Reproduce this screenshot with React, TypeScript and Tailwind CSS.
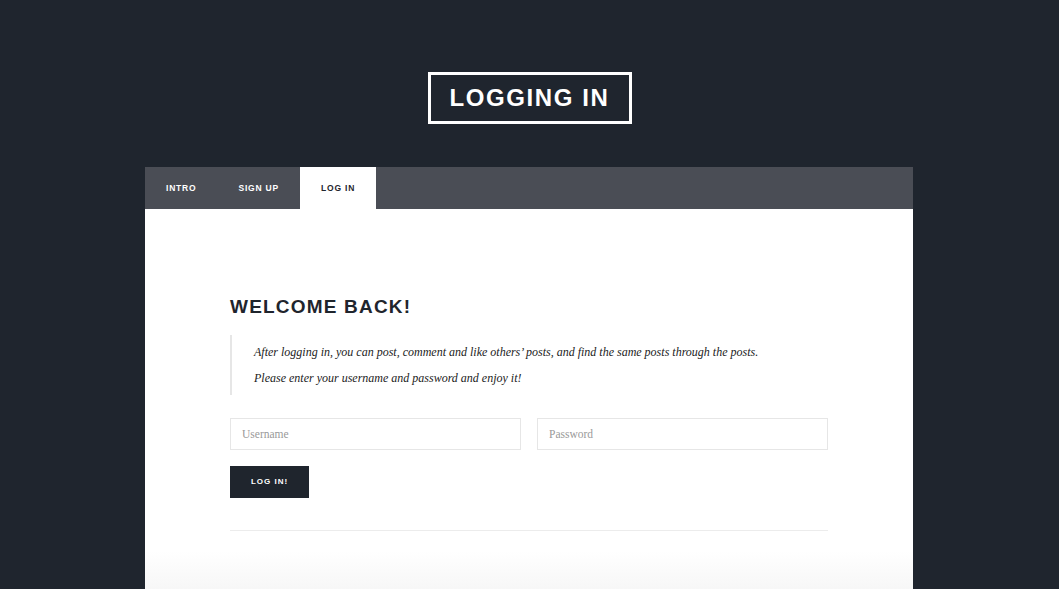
import React from 'react'

const SANS = "font-['Liberation_Sans',Arial,sans-serif]"
const SERIF = "font-['Liberation_Serif',Georgia,serif]"

function Tabs() {
  const tabs = ['Intro', 'Sign Up', 'Log In']
  const active = 'Log In'
  return (
    <div className="flex h-[42px] bg-[#4a4d55]">
      {tabs.map((t) => (
        <div
          key={t}
          className={`${SANS} flex items-center px-[21px] text-[8.5px] font-bold uppercase tracking-[0.8px] ${
            t === active ? 'bg-white text-[#1f252d]' : 'text-white'
          }`}
        >
          {t}
        </div>
      ))}
    </div>
  )
}

export default function App() {
  return (
    <div className="h-[589px] bg-[#1f252e] overflow-hidden">
      {/* Título */}
      <div className="flex justify-center pt-[72px]">
        <h1
          className={`${SANS} border-[3px] border-white px-[19px] h-[52px] flex items-center text-[24px] font-bold uppercase tracking-[1.6px] text-white`}
        >
          Logging In
        </h1>
      </div>

      {/* Panel */}
      <div className="flex justify-start mt-[43px] pl-[145px]">
        <div className="w-[768px]">
          <Tabs />
          <div className="bg-gradient-to-b from-white from-[90%] to-[#f7f7f7] px-[85px] pt-[86px] pb-[58px]">
            <h2 className={`${SANS} text-[19px] font-bold uppercase tracking-[1.2px] text-[#1f252d] leading-[24px]`}>
              Welcome Back!
            </h2>

            <blockquote className={`${SERIF} mt-[16px] border-l-2 border-[#e6e6e6] pl-[22px] pt-[9px] pb-[9px] italic text-[12px] text-[#222]`}>
              <p className="leading-[16px]">
                After logging in, you can post, comment and like others’ posts, and find the same posts through the posts.
              </p>
              <p className="mt-[10px] leading-[16px]">Please enter your username and password and enjoy it!</p>
            </blockquote>

            <form className="mt-[23px]" onSubmit={(e) => e.preventDefault()}>
              <div className="grid grid-cols-2 gap-[16px]">
                <input
                  placeholder="Username"
                  className={`${SERIF} h-[32px] border border-[#e6e6e6] px-[11px] text-[11.5px] text-[#333] placeholder:text-[#999] outline-none`}
                />
                <input
                  type="password"
                  placeholder="Password"
                  className={`${SERIF} h-[32px] border border-[#e6e6e6] px-[11px] text-[11.5px] text-[#333] placeholder:text-[#999] outline-none`}
                />
              </div>
              <button
                className={`${SANS} mt-[16px] h-[32px] w-[79px] bg-[#1f252d] text-[8px] font-bold uppercase tracking-[1px] text-white`}
              >
                Log In!
              </button>
            </form>

            <hr className="mt-[32px] border-t border-[#ececec]" />
          </div>
        </div>
      </div>
    </div>
  )
}
